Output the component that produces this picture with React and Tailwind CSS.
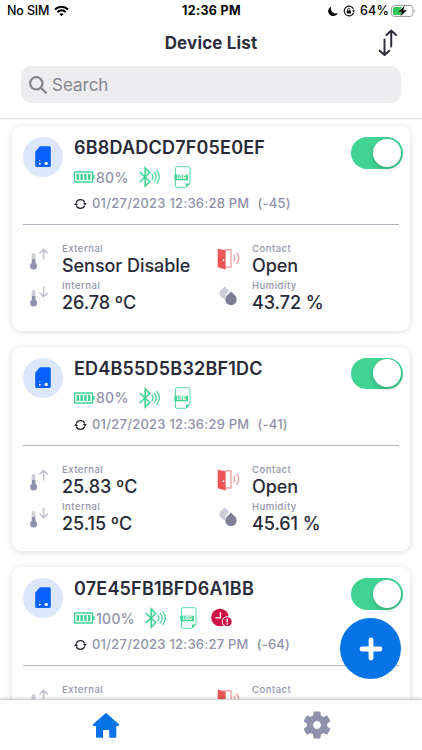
import { useState } from 'react';

const initialDevices = [
    { id: '6B8DADCD7F05E0EF', battery: '80%', time: '01/27/2023 12:36:28 PM', rssi: '(-45)', external: 'Sensor Disable', internal: '26.78 ºC', contact: 'Open', humidity: '43.72 %' },
    { id: 'ED4B55D5B32BF1DC', battery: '80%', time: '01/27/2023 12:36:29 PM', rssi: '(-41)', external: '25.83 ºC', internal: '25.15 ºC', contact: 'Open', humidity: '45.61 %' },
    { id: '07E45FB1BFD6A1BB', battery: '100%', time: '01/27/2023 12:36:27 PM', rssi: '(-64)', external: 'No Sensor', contact: 'Open', alert: true },
];

function WifiIcon() {
    return (
        <svg width="15" height="12" viewBox="0 0 16 12" fill="none" stroke="#000" strokeWidth="2.2">
            <path d="M1 4.4C5 .4 11 .4 15 4.4" />
            <path d="M3.6 7.2c2.6-2.5 6.2-2.5 8.8 0" />
            <path d="M8 11.6 5.7 9.3c1.3-1.2 3.3-1.2 4.6 0z" fill="#000" stroke="none" />
        </svg>
    );
}

function StatusBar() {
    return (
        <div className="grid h-[22px] grid-cols-[1fr_auto_1fr] items-center pr-[6px] pl-[7px] text-black">
            <div className="flex items-center gap-[5px] text-[12.5px] font-medium tracking-[-0.15px]">
                <span>No SIM</span>
                <WifiIcon />
            </div>
            <span className="text-[12.5px] font-bold tracking-[0.35px]">12:36 PM</span>
            <div className="flex items-center justify-end">
                <svg width="10" height="10" viewBox="0 0 10 10" className="mr-[5px]">
                    <path d="M3.4.4A5 5 0 1 0 9.8 7 4.9 4.9 0 0 1 3.4.4z" />
                </svg>
                <svg width="12" height="12" viewBox="0 0 12 12" fill="none" stroke="#000" strokeWidth="1.1" className="mr-[5px]">
                    <path d="M10.6 4.2A4.9 4.9 0 1 0 10.6 7.8" />
                    <path d="M9 5.2h3L10.7 7.4z" fill="#000" stroke="none" />
                    <rect x="3.7" y="5.4" width="4.2" height="3.2" rx=".5" fill="#000" stroke="none" />
                    <path d="M4.6 5.6V4.6a1.2 1.2 0 0 1 2.4 0v1" strokeWidth=".8" />
                </svg>
                <span className="mr-[2px] text-[12.5px] font-medium tracking-[0.2px]">64%</span>
                <svg width="25" height="12" viewBox="0 0 25 12">
                    <rect x=".5" y=".5" width="21.5" height="11" rx="3" fill="none" stroke="#a0a0a0" />
                    <path d="M3.5 2H11l-3 4.4h2.8L9.8 10H3.5A1.5 1.5 0 0 1 2 8.5V3.5A1.5 1.5 0 0 1 3.5 2z" fill="#35c759" />
                    <path d="M13.8.8 7.2 6.8h3.6L9.5 11.2l6.3-6h-3.6z" fill="#000" />
                    <path d="M23.2 4.2c1.2.5 1.2 3.1 0 3.6z" fill="#a0a0a0" />
                </svg>
            </div>
        </div>
    );
}

function SortIcon() {
    return (
        <svg width="20" height="28" viewBox="0 0 20 28" fill="none" stroke="#2c2e3e" strokeWidth="2" strokeLinecap="round" strokeLinejoin="round">
            <path d="M6.5 10.5v15M1.7 21.7l4.8 4.3 4.8-4.3" />
            <path d="M13.2 17.5v-15M8.4 6 13.2 1.6 18 6" />
        </svg>
    );
}

function DeviceIcon() {
    return (
        <div className="flex h-[40px] w-[40px] items-center justify-center rounded-full bg-[#dce7fb]">
            <svg width="16" height="22" viewBox="0 0 16 22">
                <path d="M5.5.3H14.3A1.5 1.5 0 0 1 15.8 1.8V19.5A1.5 1.5 0 0 1 14.3 21H1.7A1.5 1.5 0 0 1 .2 19.5V6.2A2 2 0 0 1 1 4.8L4 1.2A2 2 0 0 1 5.5.3z" fill="#0560fd" />
                <circle cx="11.2" cy="17.4" r="1.7" fill="#fff" />
                <circle cx="4.8" cy="17.7" r=".9" fill="#fff" />
                <circle cx="4.8" cy="14.5" r=".6" fill="#c5d9ff" />
            </svg>
        </div>
    );
}

function BatteryIcon() {
    return (
        <svg width="21" height="12" viewBox="0 0 21 12">
            <rect x=".6" y="1" width="18" height="10" rx=".6" fill="none" stroke="#41d393" strokeWidth="1.3" />
            <path d="M19 4h1.5v4H19z" fill="#41d393" />
            <path d="M2.6 3h2.4v6H2.6zM6.4 3h2.4v6H6.4zM10.2 3h2.4v6h-2.4zM14 3h2.4v6H14z" fill="#41d393" />
        </svg>
    );
}

function BluetoothIcon() {
    return (
        <svg width="23" height="22" viewBox="0 -1 23 22" fill="none" stroke="#41d393" strokeWidth="1.6">
            <path d="M.8 5 10.700 14.500 6.200 19V1L10.700 5.500.8 15" />
            <path d="M13 7.3q1.9 2.7 0 5.4M15.5 5.5q3.3 4.5 0 9M18 3.6q4.7 6.4 0 12.8" strokeWidth="1.2" strokeLinecap="round" />
        </svg>
    );
}

function LogIcon() {
    return (
        <svg width="17" height="22" viewBox="0 0 17 22">
            <path d="M1.5 21V2.2A1.5 1.5 0 0 1 3 .7H14.5A1.5 1.5 0 0 1 16 2.2V17L12 21.3H2" fill="none" stroke="#5fd9a5" />
            <path d="M12 21.5V17.5h4.3z" fill="#41d393" />
            <rect x=".3" y="8.7" width="13.7" height="5.6" fill="#41d393" />
            <text x="7.2" y="13.1" textAnchor="middle" fontSize="4.3" fontWeight="800" fill="#fff">LOG</text>
        </svg>
    );
}

function AlertIcon() {
    return (
        <svg width="22" height="20" viewBox="0 0 22 20" className="ml-[2px]">
            <circle cx="9" cy="9.5" r="8.8" fill="#cf1347" />
            <path d="M9.4 4.2v5.6H4.4" fill="none" stroke="#fff" strokeWidth="1.3" />
            <circle cx="16.2" cy="13.7" r="5" fill="#cf1347" stroke="#fff" />
            <path d="M16.2 10.8v3.4M16.2 15.3v1.4" stroke="#fff" strokeWidth="1.5" />
        </svg>
    );
}

function SyncIcon() {
    return (
        <svg width="13" height="12" viewBox="0 0 13 12">
            <path d="M2.200 4.500A4.600 4.600 0 0 1 10.700 4.500M10.700 7.500A4.600 4.600 0 0 1 2.200 7.500" fill="none" stroke="#222432" strokeWidth="1.3" />
            <path d="M.1 7 2 4.400 4 7zM9 5h3.900L11 7.600z" fill="#222432" />
        </svg>
    );
}

function ThermometerIcon({ down }) {
    return (
        <svg width="22" height="30" viewBox="0 0 22 30" fill="none" strokeLinecap="round" strokeLinejoin="round">
            <path d="M6.6 12.8v10" stroke="#cdced9" strokeWidth="3.8" />
            <path d="M6.6 17v7" stroke="#9091aa" strokeWidth="3.4" strokeLinecap="butt" />
            <circle cx="6.6" cy="24" r="3.5" fill="#9091aa" />
            <path d={down ? 'M16.6 8v9.5M12.9 14 16.6 17.7 20.3 14' : 'M16.6 17V7.5M12.9 11 16.6 7.3 20.3 11'} stroke="#c2c3d0" strokeWidth="1.6" />
        </svg>
    );
}

function DoorIcon() {
    return (
        <svg width="24" height="29" viewBox="0 0 24 29">
            <path d="M8 7.7h6v17.3H8" fill="none" stroke="#f4a5a6" strokeWidth="1.4" />
            <path d="M.7 6.8 8.6 8.2v19.2L.7 25.2z" fill="#ed5557" />
            <circle cx="6.5" cy="18.2" r=".9" fill="#fff" />
            <path d="M16.8 13.2q2 3 0 6M19.8 11q4 5.200 0 10.400" fill="none" stroke="#f4a5a6" strokeWidth="1.4" strokeLinecap="round" />
        </svg>
    );
}

function HumidityIcon() {
    return (
        <svg width="22" height="28" viewBox="-1 -7 22 28">
            <path d="M6.5.5 11.2 5Q7 8.500 7 13.200A6 6 0 0 1 2 5z" fill="#cbccd7" />
            <path d="M13 5.5 17 9.5a5.700 5.700 0 1 1-8 0z" fill="#7e7f96" />
        </svg>
    );
}

function Toggle({ on, onClick }) {
    return (
        <button onClick={onClick} className={`flex h-[31.5px] w-[52px] items-center rounded-full p-[2px] ${on ? 'justify-end bg-[#40d394]' : 'justify-start bg-gray-200'}`}>
            <span className="h-[28px] w-[28px] rounded-full bg-white shadow-[0_2px_4px_rgba(0,0,0,0.2)]" />
        </button>
    );
}

function Reading({ icon, label, value }) {
    return (
        <div className="flex h-[37px]">
            <div className="w-[35px] shrink-0">{icon}</div>
            <div>
                <p className="h-[13px] text-[9.5px] leading-[13px] font-medium tracking-[0.5px] text-[#9495aa]">{label}</p>
                <p className="h-[21px] text-[18px] leading-[21px] font-medium tracking-[-0.05px] whitespace-nowrap text-[#292a38]">{value}</p>
            </div>
        </div>
    );
}

function DeviceCard({ device }) {
    const [on, setOn] = useState(true);

    return (
        <div className="h-[204.5px] shrink-0 rounded-[9px] bg-white px-[11px] pt-[11px] shadow-[0_1px_6px_rgba(40,40,80,0.16)]">
            <div className="flex h-[88px] border-b border-[#b3b4bf]">
                <DeviceIcon />
                <div className="ml-[11px] flex-1">
                    <h2 className="h-[22px] text-[18px] leading-[22px] font-semibold tracking-[0.2px] text-[#292a38]">{device.id}</h2>
                    <div className="mt-[7px] flex h-[22px] items-center text-[#9091aa]">
                        <BatteryIcon />
                        <span className="ml-[1px] text-[14px] font-medium tracking-[0.3px]">{device.battery}</span>
                        <div className="ml-[10px] flex items-center gap-[12px]">
                            <BluetoothIcon />
                            <LogIcon />
                            {device.alert && <AlertIcon />}
                        </div>
                    </div>
                    <div className="mt-[6px] flex h-[20px] items-center text-[13px] font-medium tracking-[0.23px] whitespace-nowrap text-[#9091aa]">
                        <SyncIcon />
                        <span className="ml-[5px]">{device.time}</span>
                        <span className="ml-[8px]">{device.rssi}</span>
                    </div>
                </div>
                <div className="-mr-[4px]">
                    <Toggle on={on} onClick={() => setOn(!on)} />
                </div>
            </div>
            <div className="grid grid-cols-[190px_1fr] pt-[17px] pl-[4px]">
                <Reading icon={<ThermometerIcon />} label="External" value={device.external} />
                <Reading icon={<DoorIcon />} label="Contact" value={device.contact} />
                {device.internal && <Reading icon={<ThermometerIcon down />} label="Internal" value={device.internal} />}
                {device.humidity && <Reading icon={<HumidityIcon />} label="Humidity" value={device.humidity} />}
            </div>
        </div>
    );
}

function TabBar() {
    return (
        <nav className="z-10 grid h-[51px] shrink-0 grid-cols-2 justify-items-center border-t border-[#cfcfd2] bg-white pt-[11px] shadow-[0_-1px_3px_rgba(0,0,0,0.15)]">
            <svg width="28" height="28" viewBox="0 0 28 28" fill="#0674e6">
                <path d="M13 2.7q1-.8 2 0l12 10.5q.8 1.5-.8 1.7H24.3V25.5a1.2 1.2 0 0 1-1.2 1.2H17.3V20a1 1 0 0 0-1-1H12a1 1 0 0 0-1 1v6.7H5.2A1.2 1.2 0 0 1 4 25.5V14.9H1.8Q.2 14.7 1 13.2z" />
            </svg>
            <svg width="34" height="34" viewBox="0 0 24 24" fill="#9091aa" className="-mt-[3px]">
                <path d="M19.14 12.94c.04-.3.06-.61.06-.94 0-.32-.02-.64-.07-.94l2.03-1.58c.18-.14.23-.41.12-.61l-1.92-3.32c-.12-.22-.37-.29-.59-.22l-2.39.96c-.5-.38-1.03-.7-1.62-.94l-.36-2.54c-.04-.24-.24-.41-.48-.41h-3.84c-.24 0-.43.17-.47.41l-.36 2.54c-.59.24-1.13.57-1.62.94l-2.39-.96c-.22-.08-.47 0-.59.22L2.74 8.87c-.12.21-.08.47.12.61l2.03 1.58c-.05.3-.09.63-.09.94s.02.64.07.94l-2.03 1.58c-.18.14-.23.41-.12.61l1.92 3.32c.12.22.37.29.59.22l2.39-.96c.5.38 1.03.7 1.62.94l.36 2.54c.05.24.24.41.48.41h3.84c.24 0 .44-.17.47-.41l.36-2.54c.59-.24 1.13-.56 1.62-.94l2.39.96c.22.08.47 0 .59-.22l1.92-3.32c.12-.22.07-.47-.12-.61l-2.01-1.58zM12 14.8c-1.55 0-2.8-1.25-2.8-2.8s1.25-2.8 2.8-2.8 2.8 1.25 2.8 2.8-1.25 2.8-2.8 2.8z" />
            </svg>
        </nav>
    );
}

export default function App() {
    return (
        <div className="relative flex h-[750px] w-[422px] flex-col overflow-hidden bg-white font-['Inter','Liberation_Sans',sans-serif]">
            <header className="h-[119px] shrink-0 border-b border-[#dcdce0]">
                <StatusBar />
                <div className="grid h-[44px] grid-cols-[1fr_auto_1fr] items-center px-[24px]">
                    <h1 className="col-start-2 text-[17px] font-bold tracking-[0.15px] text-[#2c2e3e]">Device List</h1>
                    <div className="justify-self-end pb-[2px]">
                        <SortIcon />
                    </div>
                </div>
                <label className="mx-[21px] flex h-[37px] items-center rounded-[10px] bg-[#ededef] pl-[8px]">
                    <svg width="18" height="18" viewBox="0 0 18 18" fill="none" stroke="#828288" strokeWidth="2.2" strokeLinecap="round">
                        <circle cx="7.3" cy="7.3" r="6.2" />
                        <path d="m12 12 5 4.8" />
                    </svg>
                    <span className="ml-[5px] pt-[2px] text-[17px] text-[#85858b]">Search</span>
                </label>
            </header>
            <main className="flex min-h-0 flex-1 flex-col gap-[16px] overflow-hidden px-[12px] pt-[7px]">
                {initialDevices.map((device) => (
                    <DeviceCard key={device.id} device={device} />
                ))}
            </main>
            <TabBar />
            <button className="absolute top-[618px] left-[340px] flex h-[61px] w-[61px] items-center justify-center rounded-full bg-[#0674e6]">
                <svg width="24" height="24" viewBox="0 0 24 24" stroke="#fff" strokeWidth="4.8" strokeLinecap="round">
                    <path d="M12 3v18M3 12h18" />
                </svg>
            </button>
        </div>
    );
}
